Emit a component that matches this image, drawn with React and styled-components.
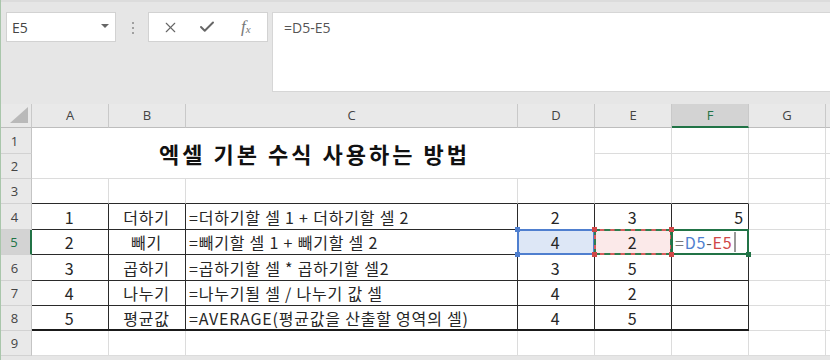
import React from "react";
import styled, { createGlobalStyle, css } from "styled-components";
import { X, Check } from "lucide-react";

const Global = createGlobalStyle`
  html, body { margin: 0; padding: 0; background: #e6e6e6; }
  body { width: 830px; height: 360px; overflow: hidden; }
`;

const Frame = styled.div`
  width: 829px;
  height: 360px;
  border-left: 1px solid #a9c6ab;
  background: #e6e6e6;
  display: flex;
  flex-direction: column;
  overflow: hidden;
  font-family: "Noto Sans CJK KR", "Noto Sans", sans-serif;
`;

const TopBar = styled.div`
  height: 104px;
  flex: 0 0 104px;
  box-sizing: border-box;
  display: flex;
  align-items: flex-start;
  padding: 12px 0 0 5px;
  border-top: 2px solid #dcdcdc;
`;

const NameBox = styled.div`
  width: 110px;
  height: 30px;
  margin-top: -2px;
  box-sizing: border-box;
  background: #fff;
  border: 1px solid #d2d2d2;
  display: flex;
  align-items: center;
  justify-content: space-between;
  padding: 0 6px 0 5px;
  font-family: "Open Sans", "Noto Sans", sans-serif;
  font-size: 14px;
  color: #444;
`;

const Caret = styled.span`
  width: 0;
  height: 0;
  border-left: 4px solid transparent;
  border-right: 4px solid transparent;
  border-top: 4px solid #666;
  margin-top: -2px;
`;

const Dots = styled.div`
  margin: 8px 14px 0 16px;
  display: flex;
  flex-direction: column;
  gap: 3px;
  span {
    width: 2px;
    height: 2px;
    background: #a0a0a0;
  }
`;

const FxBox = styled.div`
  width: 120px;
  height: 30px;
  margin-top: -2px;
  box-sizing: border-box;
  background: #fff;
  border: 1px solid #d2d2d2;
  display: flex;
  align-items: center;
  padding-left: 13px;
  gap: 19px;
  color: #666;
`;

const FxText = styled.span`
  font-family: "Liberation Serif", serif;
  font-style: italic;
  font-size: 17px;
  color: #777;
  margin-left: 6px;
  sub {
    font-size: 11px;
    vertical-align: -1px;
  }
`;

const FormulaBar = styled.div`
  margin-left: 4px;
  margin-top: -2px;
  flex: 1;
  height: 80px;
  box-sizing: border-box;
  background: #fff;
  border: 1px solid #d6d6d6;
  border-right: none;
  padding: 5px 11px;
  font-family: "Open Sans", "Noto Sans", sans-serif;
  font-size: 14px;
  color: #555;
`;

const Sheet = styled.div`
  display: grid;
  grid-template-columns: 31px 77px 77px 332px 77px 77px 77px 77px 1fr;
  grid-template-rows: 24px 26px 25px 25px 26px 25px 26px 25px 25px 25px;
  background: #fff;
`;

const ColHead = styled.div`
  box-sizing: border-box;
  background: ${(p) => (p.$active ? "#d3d3d3" : "#e9e9e9")};
  border-right: 1px solid #c9c9c9;
  border-bottom: ${(p) => (p.$active ? "2px solid #217346" : "1px solid #bdbdbd")};
  display: flex;
  align-items: center;
  justify-content: center;
  font-family: "Open Sans", "Noto Sans", sans-serif;
  font-size: 13px;
  color: ${(p) => (p.$active ? "#217346" : "#444")};
  padding-bottom: 1px;
`;

const Corner = styled.div`
  box-sizing: border-box;
  background: #e9e9e9;
  border-right: 1px solid #c9c9c9;
  border-bottom: 1px solid #bdbdbd;
  display: flex;
  align-items: flex-end;
  justify-content: flex-end;
  padding: 0 3px 4px 0;
`;

const RowHead = styled.div`
  box-sizing: border-box;
  background: ${(p) => (p.$active ? "#d3d3d3" : "#e9e9e9")};
  border-right: ${(p) => (p.$active ? "2px solid #217346" : "1px solid #c4c4c4")};
  border-bottom: 1px solid #d2d2d2;
  display: flex;
  align-items: center;
  justify-content: center;
  font-family: "Open Sans", "Noto Sans", sans-serif;
  font-size: 13px;
  color: ${(p) => (p.$active ? "#217346" : "#444")};
  padding-right: 3px;
`;

const Cell = styled.div`
  position: relative;
  box-sizing: border-box;
  min-width: 0;
  border-right: 1px solid ${(p) => (p.$dr ? "#2a2a2a" : p.$noR ? "transparent" : "#dcdcdc")};
  border-bottom: ${(p) => (p.$db ? (p.$thick ? "2px solid #1a1a1a" : "1px solid #2a2a2a") : p.$noB ? "1px solid transparent" : "1px solid #dcdcdc")};
  display: flex;
  align-items: center;
  justify-content: ${(p) => (p.$align === "left" ? "flex-start" : p.$align === "right" ? "flex-end" : "center")};
  padding: 0 4px 0 3px;
  font-size: 16px;
  letter-spacing: 0.8px;
  color: #262626;
  white-space: nowrap;
  background: ${(p) => p.$bg || "#fff"};
`;

const Title = styled.div`
  grid-column: 2 / 6;
  grid-row: 2 / 4;
  box-sizing: border-box;
  border-right: 1px solid #dcdcdc;
  border-bottom: 1px solid #dcdcdc;
  display: flex;
  align-items: center;
  justify-content: center;
  font-size: 22px;
  letter-spacing: 3px;
  font-weight: 700;
  color: #111;
  padding-left: 3px;
`;

const Frame2 = styled.span`
  position: absolute;
  left: -1px;
  top: -1px;
  right: -1px;
  bottom: -1px;
  pointer-events: none;
  ${(p) =>
    p.$kind === "blue" &&
    css`
      border: 2px solid #4f7fcf;
    `}
  ${(p) =>
    p.$kind === "red" &&
    css`
      border: 2px solid #d85c5c;
      outline: 2px dashed #2e7d4f;
      outline-offset: -2px;
    `}
  ${(p) =>
    p.$kind === "green" &&
    css`
      border: 2px solid #217346;
    `}
`;

const Handle = styled.span`
  position: absolute;
  width: 5px;
  height: 5px;
  background: ${(p) => p.$c};
  ${(p) => (p.$t ? "top: -3px;" : "bottom: -3px;")}
  ${(p) => (p.$l ? "left: -3px;" : "right: -3px;")}
  z-index: 2;
`;

const RefText = styled.span`
  color: ${(p) => p.$c};
`;

const CursorBar = styled.span`
  display: inline-block;
  width: 2px;
  height: 20px;
  background: #999;
  margin-left: 2px;
  vertical-align: middle;
`;

const rows = [
  ["1", "더하기", "=더하기할 셀 1 + 더하기할 셀 2", "2", "3", "5"],
  ["2", "빼기", "=빼기할 셀 1 + 빼기할 셀 2", "4", "2", ""],
  ["3", "곱하기", "=곱하기할 셀 * 곱하기할 셀2", "3", "5", ""],
  ["4", "나누기", "=나누기될 셀 / 나누기 값 셀", "4", "2", ""],
  ["5", "평균값", "=AVERAGE(평균값을 산출할 영역의 셀)", "4", "5", ""],
];

const handles = (c, corners) =>
  corners.map(([t, l], i) => <Handle key={i} $c={c} $t={t} $l={l} />);

const all4 = [
  [true, true],
  [true, false],
  [false, true],
  [false, false],
];

export default function App() {
  return (
    <>
      <Global />
      <Frame>
        <TopBar>
          <NameBox>
            <span>E5</span>
            <Caret />
          </NameBox>
          <Dots>
            <span />
            <span />
            <span />
          </Dots>
          <FxBox>
            <X size={17} strokeWidth={1.6} color="#666" />
            <Check size={18} strokeWidth={2.6} color="#666" />
            <FxText>
              f<sub>x</sub>
            </FxText>
          </FxBox>
          <FormulaBar>=D5-E5</FormulaBar>
        </TopBar>
        <Sheet>
          <Corner>
            <svg width="18" height="16" viewBox="0 0 18 16">
              <polygon points="18,0 18,16 0,16" fill="#b9b9b9" />
            </svg>
          </Corner>
          {["A", "B", "C", "D", "E", "F", "G", ""].map((c, i) => (
            <ColHead key={i} $active={c === "F"}>
              {c}
            </ColHead>
          ))}

          {/* row 1 */}
          <RowHead>1</RowHead>
          <Title>엑셀 기본 수식 사용하는 방법</Title>
          <Cell />
          <Cell />
          <Cell />
          <Cell />
          {/* row 2 */}
          <RowHead>2</RowHead>
          <Cell />
          <Cell />
          <Cell />
          <Cell />
          {/* row 3 */}
          <RowHead>3</RowHead>
          {[0, 1, 2, 3, 4].map((i) => (
            <Cell key={i} $db />
          ))}
          <Cell $db />
          <Cell />
          <Cell />

          {rows.map((r, ri) => {
            const n = ri + 4;
            const last = ri === rows.length - 1;
            const active = n === 5;
            return (
              <React.Fragment key={n}>
                <RowHead $active={active}>{n}</RowHead>
                <Cell $dr $db $thick={last}>{r[0]}</Cell>
                <Cell $dr $db $thick={last}>{r[1]}</Cell>
                <Cell $dr $db $thick={last} $align="left">
                  {r[2]}
                </Cell>
                <Cell $dr $db $thick={last} $bg={active ? "#dde7f6" : undefined}>
                  {r[3]}
                  {active && (
                    <>
                      <Frame2 $kind="blue" />
                      {handles("#4f7fcf", all4)}
                    </>
                  )}
                </Cell>
                <Cell $dr $db $thick={last} $bg={active ? "#fbe9e9" : undefined}>
                  {r[4]}
                  {active && (
                    <>
                      <Frame2 $kind="red" />
                      {handles("#d04848", all4)}
                    </>
                  )}
                </Cell>
                <Cell $dr $db $thick={last} $align={active ? "left" : "right"}>
                  {active ? (
                    <>
                      <RefText $c="#777">=</RefText>
                      <RefText $c="#4f7fcf">D5</RefText>
                      <RefText $c="#555">-</RefText>
                      <RefText $c="#d04848">E5</RefText>
                      <CursorBar />
                      <Frame2 $kind="green" />
                      <Handle $c="#217346" />
                    </>
                  ) : (
                    r[5]
                  )}
                </Cell>
                <Cell />
                <Cell />
              </React.Fragment>
            );
          })}
          <RowHead>9</RowHead>
          {[0, 1, 2, 3, 4, 5, 6, 7].map((i) => (
            <Cell key={i} />
          ))}
        </Sheet>
      </Frame>
    </>
  );
}
